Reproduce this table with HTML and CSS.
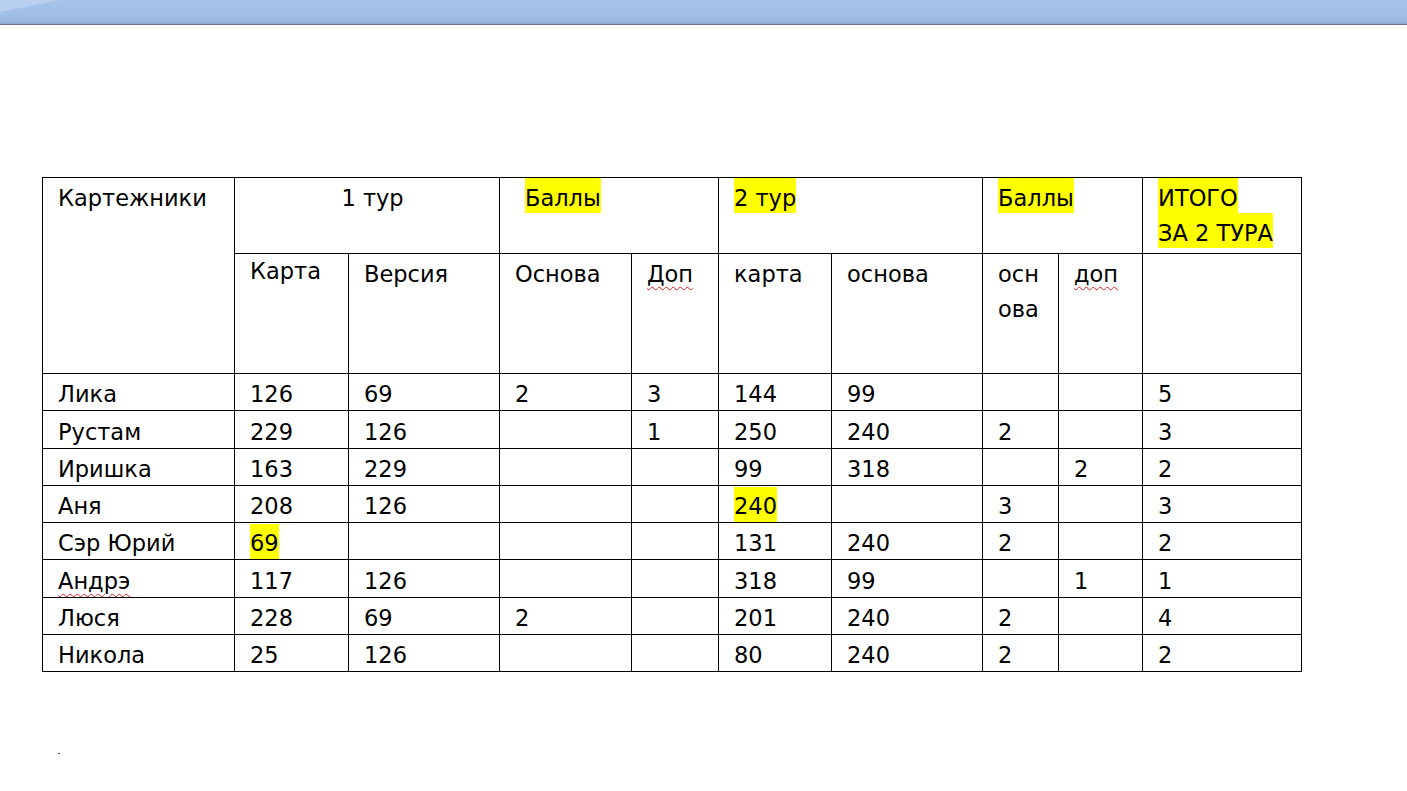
FILE: index.html
```html
<!DOCTYPE html>
<html lang="ru">
<head>
<meta charset="utf-8">
<title>Картежники</title>
<link rel="stylesheet" href="styles.css">
</head>
<body>
<div class="topbar"></div>
<main class="page">
  <table class="score">
    <colgroup>
      <col class="c-name"><col class="c-karta"><col class="c-vers"><col class="c-osn"><col class="c-dop">
      <col class="c-karta2"><col class="c-osn2"><col class="c-osn3"><col class="c-dop2"><col class="c-total">
    </colgroup>
    <thead>
      <tr class="h1">
        <td rowspan="2">Картежники</td>
        <td colspan="2" class="center">1 тур</td>
        <td colspan="2" class="indent"><span class="hl">Баллы</span></td>
        <td colspan="2"><span class="hl">2 тур</span></td>
        <td colspan="2"><span class="hl">Баллы</span></td>
        <td><span class="hl">ИТОГО</span><br><span class="hl">ЗА 2 ТУРА</span></td>
      </tr>
      <tr class="h2">
        <td class="raise">Карта</td>
        <td>Версия</td>
        <td>Основа</td>
        <td><span class="spell">Доп</span></td>
        <td>карта</td>
        <td>основа</td>
        <td>осн<br>ова</td>
        <td><span class="spell">доп</span></td>
        <td></td>
      </tr>
    </thead>
    <tbody>
      <tr><td>Лика</td><td>126</td><td>69</td><td>2</td><td>3</td><td>144</td><td>99</td><td></td><td></td><td>5</td></tr>
      <tr><td>Рустам</td><td>229</td><td>126</td><td></td><td>1</td><td>250</td><td>240</td><td>2</td><td></td><td>3</td></tr>
      <tr><td>Иришка</td><td>163</td><td>229</td><td></td><td></td><td>99</td><td>318</td><td></td><td>2</td><td>2</td></tr>
      <tr><td>Аня</td><td>208</td><td>126</td><td></td><td></td><td><span class="hl hl-b">240</span></td><td></td><td>3</td><td></td><td>3</td></tr>
      <tr><td>Сэр Юрий</td><td><span class="hl hl-b">69</span></td><td></td><td></td><td></td><td>131</td><td>240</td><td>2</td><td></td><td>2</td></tr>
      <tr><td><span class="spell">Андрэ</span></td><td>117</td><td>126</td><td></td><td></td><td>318</td><td>99</td><td></td><td>1</td><td>1</td></tr>
      <tr><td>Люся</td><td>228</td><td>69</td><td>2</td><td></td><td>201</td><td>240</td><td>2</td><td></td><td>4</td></tr>
      <tr><td>Никола</td><td>25</td><td>126</td><td></td><td></td><td>80</td><td>240</td><td>2</td><td></td><td>2</td></tr>
    </tbody>
  </table>
  <div class="mark"></div>
</main>
</body>
</html>
```

FILE: styles.css
```css
html, body {
  margin: 0;
  padding: 0;
  background: #ffffff;
}

body {
  font-family: "DejaVu Sans", "Liberation Sans", sans-serif;
  color: #000000;
}

.topbar {
  position: relative;
  height: 24px;
  background: linear-gradient(to bottom, #a7c3ea 0%, #a0bee6 70%, #98b5de 92%, #8aa3c6 100%);
  border-bottom: 1px solid #6b7587;
  overflow: hidden;
}

.topbar::before {
  content: "";
  position: absolute;
  left: 0;
  top: 0;
  width: 60px;
  height: 12px;
  background: #b9cff0;
  clip-path: polygon(0 0, 100% 0, 0 100%);
}

.page {
  padding: 152px 0 0 42px;
}

.score {
  border-collapse: collapse;
  table-layout: fixed;
  width: 1260px;
  font-size: 22.5px;
}

.c-name { width: 192px; }
.c-karta { width: 114px; }
.c-vers { width: 151px; }
.c-osn { width: 132px; }
.c-dop { width: 87px; }
.c-karta2 { width: 113px; }
.c-osn2 { width: 151px; }
.c-osn3 { width: 76px; }
.c-dop2 { width: 84px; }
.c-total { width: 159px; }

.score td {
  border: 1px solid #000000;
  vertical-align: top;
  text-align: left;
  padding: 3px 4px 0 15px;
  line-height: 35px;
  white-space: nowrap;
  overflow: hidden;
}

.score .h1 td {
  height: 72px;
}

.score .h2 td {
  height: 116px;
}

.score td.center {
  text-align: center;
}

.score td.indent {
  padding-left: 25px;
}

.score td.raise {
  padding-top: 0;
  height: 119px;
}

.score tbody td {
  line-height: 32px;
  padding-top: 4.25px;
  height: 32px;
}

.hl {
  display: inline-block;
  background: #ffff00;
  line-height: 30px;
  padding-top: 5px;
  margin-top: -5px;
}

.hl-b {
  line-height: 32px;
  padding-top: 3.5px;
  margin-top: -3.5px;
  padding-bottom: 1.5px;
  margin-bottom: -1.5px;
}

.spell {
  text-decoration: underline wavy #e02020;
  text-decoration-thickness: 1px;
  text-underline-offset: 4px;
}

.mark {
  width: 2px;
  height: 1px;
  margin: 81px 0 0 16px;
  background: #444444;
}
```
